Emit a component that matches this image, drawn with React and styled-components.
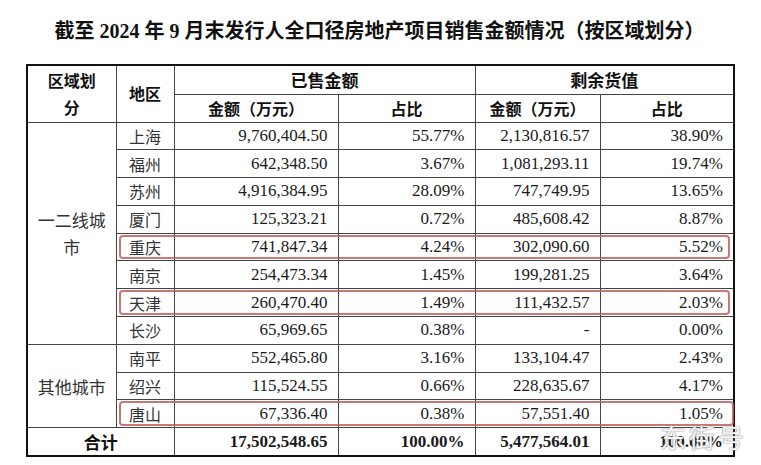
import React from 'react';
import styled, { createGlobalStyle } from 'styled-components';

const GlobalStyle = createGlobalStyle`
  html, body {
    margin: 0;
    padding: 0;
    background: #fff;
  }
  body {
    width: 761px;
    height: 465px;
    overflow: hidden;
    font-family: "Liberation Serif", "Noto Sans CJK SC", serif;
    color: #1a1a1a;
  }
`;

const Page = styled.div`
  position: relative;
  width: 761px;
  height: 465px;
  padding: 17px 0 0 26px;
  box-sizing: border-box;
`;

const Title = styled.h1`
  margin: 0 0 19px;
  width: 707px;
  text-align: center;
  font-size: 20px;
  line-height: 28px;
  font-weight: 700;
  color: #111;
`;

const Sheet = styled.table`
  border-collapse: collapse;
  table-layout: fixed;
  width: 707px;
  border: 2px solid #111;
`;

const Row = styled.tr`
  height: ${p => p.$h}px;
`;

const HeadCell = styled.th`
  border: 1px solid #444;
  padding: 0;
  font-family: "Noto Sans CJK SC", sans-serif;
  font-size: ${p => p.$size || 16}px;
  line-height: 27px;
  font-weight: 700;
  text-align: center;
  vertical-align: middle;
  color: #111;
`;

const GroupCell = styled.td`
  border: 1px solid #444;
  padding: 0;
  font-family: "Noto Sans CJK SC", sans-serif;
  font-size: 17px;
  line-height: 27px;
  text-align: center;
  color: #333;
`;

const NameCell = styled.td`
  position: relative;
  border: 1px solid #444;
  padding: 0;
  font-family: "Noto Sans CJK SC", sans-serif;
  font-size: 16px;
  text-align: center;
  color: #333;

  &::after {
    content: '';
    display: ${p => (p.$mark ? 'block' : 'none')};
    position: absolute;
    left: 2px;
    top: 1px;
    bottom: 1px;
    width: ${p => p.$reach || 611}px;
    border: 2px solid rgba(190, 95, 92, 0.85);
    border-radius: 4px;
    box-sizing: border-box;
    pointer-events: none;
  }
`;

const NumCell = styled.td`
  border: 1px solid #444;
  padding: 0 10px 0 0;
  font-size: 17px;
  font-weight: ${p => (p.$bold ? 700 : 400)};
  text-align: right;
  white-space: nowrap;
  color: #1a1a1a;
`;

const TotalLabel = styled.td`
  border: 1px solid #444;
  padding: 0;
  font-family: "Noto Sans CJK SC", sans-serif;
  font-size: 17px;
  font-weight: 700;
  text-align: center;
  color: #111;
`;

const Watermark = styled.div`
  position: absolute;
  left: 660px;
  top: 418px;
  font-family: "Noto Sans CJK SC", sans-serif;
  font-size: 26px;
  letter-spacing: 3px;
  color: rgba(255, 255, 255, 0.95);
  text-shadow: 0 0 1px #777, 0 0 2px #999;
  pointer-events: none;
`;

const rows = [
  { name: '上海', sold: '9,760,404.50', soldPct: '55.77%', left: '2,130,816.57', leftPct: '38.90%' },
  { name: '福州', sold: '642,348.50', soldPct: '3.67%', left: '1,081,293.11', leftPct: '19.74%' },
  { name: '苏州', sold: '4,916,384.95', soldPct: '28.09%', left: '747,749.95', leftPct: '13.65%' },
  { name: '厦门', sold: '125,323.21', soldPct: '0.72%', left: '485,608.42', leftPct: '8.87%' },
  { name: '重庆', sold: '741,847.34', soldPct: '4.24%', left: '302,090.60', leftPct: '5.52%', mark: true },
  { name: '南京', sold: '254,473.34', soldPct: '1.45%', left: '199,281.25', leftPct: '3.64%' },
  { name: '天津', sold: '260,470.40', soldPct: '1.49%', left: '111,432.57', leftPct: '2.03%', mark: true },
  { name: '长沙', sold: '65,969.65', soldPct: '0.38%', left: '-', leftPct: '0.00%' },
  { name: '南平', sold: '552,465.80', soldPct: '3.16%', left: '133,104.47', leftPct: '2.43%' },
  { name: '绍兴', sold: '115,524.55', soldPct: '0.66%', left: '228,635.67', leftPct: '4.17%' },
  { name: '唐山', sold: '67,336.40', soldPct: '0.38%', left: '57,551.40', leftPct: '1.05%', mark: true, reach: 615 },
];

const groupFor = (i) => {
  if (i === 0) return <GroupCell rowSpan={8}>一二线城<br />市</GroupCell>;
  if (i === 8) return <GroupCell rowSpan={3}>其他城市</GroupCell>;
  return null;
};

const App = () => {
  return (
    <Page>
      <GlobalStyle />
      <Title>截至 2024 年 9 月末发行人全口径房地产项目销售金额情况（按区域划分）</Title>
      <Sheet>
        <colgroup>
          <col style={{ width: 89 }} />
          <col style={{ width: 58 }} />
          <col style={{ width: 164 }} />
          <col style={{ width: 137 }} />
          <col style={{ width: 125 }} />
          <col style={{ width: 134 }} />
        </colgroup>
        <thead>
          <Row $h={29}>
            <HeadCell rowSpan={2}>区域划<br />分</HeadCell>
            <HeadCell rowSpan={2}>地区</HeadCell>
            <HeadCell colSpan={2} $size={17}>已售金额</HeadCell>
            <HeadCell colSpan={2} $size={17}>剩余货值</HeadCell>
          </Row>
          <Row $h={28}>
            <HeadCell>金额（万元）</HeadCell>
            <HeadCell>占比</HeadCell>
            <HeadCell>金额（万元）</HeadCell>
            <HeadCell>占比</HeadCell>
          </Row>
        </thead>
        <tbody>
          {rows.map((r, i) => (
            <Row $h={27.8} key={r.name}>
              {groupFor(i)}
              <NameCell $mark={r.mark} $reach={r.reach}>{r.name}</NameCell>
              <NumCell>{r.sold}</NumCell>
              <NumCell>{r.soldPct}</NumCell>
              <NumCell>{r.left}</NumCell>
              <NumCell>{r.leftPct}</NumCell>
            </Row>
          ))}
          <Row $h={28}>
            <TotalLabel colSpan={2}>合计</TotalLabel>
            <NumCell $bold>17,502,548.65</NumCell>
            <NumCell $bold>100.00%</NumCell>
            <NumCell $bold>5,477,564.01</NumCell>
            <NumCell $bold>100.00%</NumCell>
          </Row>
        </tbody>
      </Sheet>
      <Watermark>东街号</Watermark>
    </Page>
  );
};

export default App;
